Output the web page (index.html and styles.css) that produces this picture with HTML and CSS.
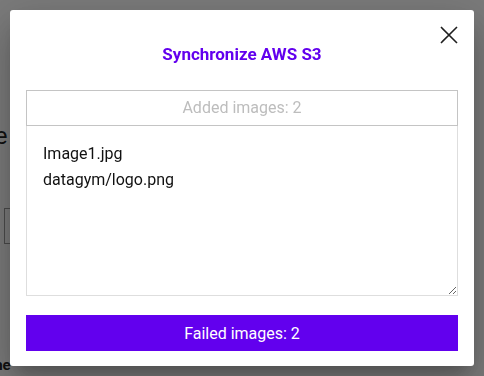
FILE: index.html
```html
<!DOCTYPE html>
<html lang="en">
<head>
    <meta charset="UTF-8">
    <meta name="viewport" content="width=device-width, initial-scale=1.0">
    <title>Synchronize AWS S3</title>
    <link rel="stylesheet" href="styles.css">
</head>
<body>

    <!-- Pagina atras do dialogo -->
    <div class="page">
        <h2 class="page-title">Image storage</h2>
        <div class="page-field"></div>
        <div class="page-label">Done</div>
    </div>

    <!-- Dialogo de sincronizacao -->
    <div class="overlay">
        <div class="dialog">
            <button class="close" aria-label="Close">
                <svg width="18" height="18" viewBox="0 0 18 18">
                    <path d="M1 1 L17 17 M17 1 L1 17" stroke="#1f1f1f" stroke-width="1.6" fill="none"/>
                </svg>
            </button>
            <h3 class="dialog-title">Synchronize AWS S3</h3>
            <div class="result-head">Added images: 2</div>
            <textarea class="result-list" readonly>Image1.jpg
datagym/logo.png</textarea>
            <button class="failed">Failed images: 2</button>
        </div>
    </div>

</body>
</html>
```

FILE: styles.css
```css
body {
    font-family: Roboto, "Liberation Sans", sans-serif;
    background-color: #fff;
    margin: 0;
    padding: 0;
}

/* Pagina de fundo */
.page {
    padding: 122px 0 0 4px;
}
.page-title {
    margin: 0 0 0 -150px;
    font-size: 24px;
    font-weight: 400;
    line-height: 28px;
    color: #222;
}
.page-field {
    margin-top: 58px;
    width: 220px;
    height: 34px;
    border: 1px solid #999;
}
.page-label {
    margin: 112px 0 0 -28px;
    font-size: 15px;
    font-weight: 700;
    color: #222;
}

/* Overlay e dialogo */
.overlay {
    position: fixed;
    top: 0;
    left: 0;
    width: 100%;
    height: 100%;
    background-color: rgba(0, 0, 0, 0.52);
    display: flex;
    align-items: center;
    justify-content: center;
}
.dialog {
    position: relative;
    box-sizing: border-box;
    width: 464px;
    height: 356px;
    background-color: #fff;
    border-radius: 3px;
    padding: 16px 16px 15px;
    display: flex;
    flex-direction: column;
    box-shadow: 0 11px 15px -7px rgba(0, 0, 0, 0.2),
                0 24px 38px 3px rgba(0, 0, 0, 0.14),
                0 9px 46px 8px rgba(0, 0, 0, 0.12);
}
.close {
    position: absolute;
    top: 16px;
    right: 16px;
    padding: 0;
    border: none;
    background: none;
    cursor: pointer;
    width: 18px;
    height: 18px;
}
.close svg {
    display: block;
}
.dialog-title {
    margin: 16px 0 24px;
    text-align: center;
    font-size: 17px;
    line-height: 24px;
    font-weight: 700;
    color: #6200ee;
}
.result-head {
    height: 34px;
    line-height: 34px;
    border: 1px solid #c4c4c4;
    text-align: center;
    font-size: 16px;
    color: #bdbdbd;
}
.result-list {
    box-sizing: border-box;
    width: 100%;
    height: 171px;
    margin: 0;
    padding: 15px 16px;
    border: 1px solid #dedede;
    border-top: none;
    font-family: inherit;
    font-size: 16px;
    line-height: 26px;
    color: #111;
    outline: none;
}
.failed {
    margin-top: 19px;
    height: 36px;
    border: none;
    background-color: #6200ee;
    color: #fff;
    font-family: inherit;
    font-size: 16px;
    cursor: pointer;
}
```
